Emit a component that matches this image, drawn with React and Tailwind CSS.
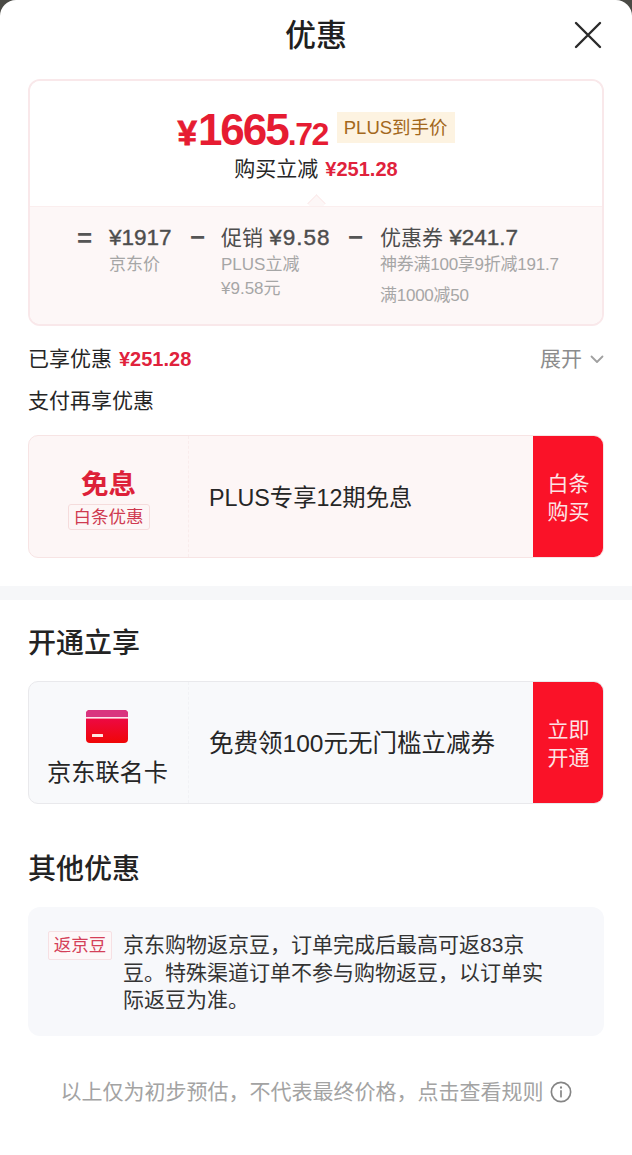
import React from "react";

const FONT = { fontFamily: '"Liberation Sans","Noto Sans CJK SC",sans-serif' };

function Offer({ tone, left, text, textSize, cta }) {
  const pink = tone === "pink";
  return (
    <div className={`mx-7 flex h-[123px] overflow-hidden rounded-[10px] border ${pink ? "border-[#f7e4e4] bg-[#fdf6f6]" : "border-[#e9e9ec] bg-[#f8f9fb]"}`}>
      <div className={`flex w-[160px] shrink-0 flex-col items-center justify-center border-r border-dashed ${pink ? "border-[#f9ecec]" : "border-[#f1f2f5]"}`}>
        {left}
      </div>
      <div className={`flex flex-1 items-center pt-1 pl-5 text-[#262626] ${textSize}`}>{text}</div>
      <div className="flex w-[70px] shrink-0 items-center justify-center bg-[#fa1228] pt-[2px] pl-[1px] text-center text-[21px] leading-[28px] text-[#fde3e5]">
        <span>{cta[0]}<br />{cta[1]}</span>
      </div>
    </div>
  );
}

export default function App() {
  return (
    <div className="min-h-screen bg-[#4a4a45]" style={FONT}>
      <div className="min-h-[1155px] rounded-t-[16px] bg-white">
        <header className="relative flex h-[79px] items-start justify-center pt-[13px]">
          <h1 className="text-[31px] leading-[46px] font-medium text-[#1f1f1f]">优惠</h1>
          <svg className="absolute top-[21px] right-[30px]" width="28" height="28" viewBox="0 0 28 28" fill="none" stroke="#2a2a2a" strokeWidth="2.4" strokeLinecap="round">
            <path d="M2 2 L26 26 M26 2 L2 26" />
          </svg>
        </header>

        <section className="relative mx-7 h-[247px] overflow-hidden rounded-[12px] border-2 border-[#f9e8ea]">
          <div className="flex h-[125px] flex-col items-center bg-white pt-[27px]">
            <div className="flex items-center">
              <span className="flex items-baseline font-bold text-[#e61c32]">
                <span className="text-[35px] leading-[44px] [-webkit-text-stroke:0.8px_#e61c32]">¥</span>
                <span className="ml-[1px] text-[44px] leading-[44px] tracking-[-2px]">1665</span>
                <span className="text-[32px] leading-[44px] tracking-[-1.5px]">.72</span>
              </span>
              <span className="mb-[9px] ml-[9px] flex h-[31px] items-center bg-[#fdf3e1] px-[7px] text-[18.5px] text-[#a3681c]">PLUS到手价</span>
            </div>
            <div className="mt-[-1px] flex items-center text-[21px] leading-[28px] text-[#262626]">
              <span>购买立减</span>
              <span className="ml-[7px] text-[20px] font-bold text-[#e0223c]">¥251.28</span>
            </div>
          </div>
          <div className="absolute top-[116px] left-[280px] h-[13px] w-[13px] rotate-45 border-t border-l border-[#fbeaea] bg-[#fdf7f7]" />
          <div className="relative flex h-[118px] border-t border-[#fbeeee] bg-[#fdf7f7] pt-[17px] pl-[47px]">
            <span className="w-[32px] text-[26px] leading-[28px] font-bold text-[#555]">=</span>
            <div className="w-[81px]">
              <div className="text-[22.5px] leading-[28px] text-[#4d4d4d] [-webkit-text-stroke:0.4px_#4d4d4d]">¥1917</div>
              <div className="mt-[1px] text-[17px] leading-[24px] text-[#a6a6a6]">京东价</div>
            </div>
            <span className="w-[31px] text-[26px] leading-[26px] font-bold text-[#555]">−</span>
            <div className="w-[127px]">
              <div className="text-[22.5px] leading-[28px] text-[#4d4d4d]"><span className="text-[21px]">促销</span> <span className="tracking-[1px] [-webkit-text-stroke:0.4px_#4d4d4d]">¥9.58</span></div>
              <div className="mt-[1px] text-[17px] leading-[24px] text-[#a6a6a6]">PLUS立减</div>
              <div className="text-[17px] leading-[24px] text-[#a6a6a6]">¥9.58元</div>
            </div>
            <span className="w-[32px] text-[26px] leading-[26px] font-bold text-[#555]">−</span>
            <div>
              <div className="text-[22.5px] leading-[28px] text-[#4d4d4d]"><span className="text-[21px]">优惠券</span> <span className="[-webkit-text-stroke:0.4px_#4d4d4d]">¥241.7</span></div>
              <div className="mt-[1px] text-[17px] leading-[24px] tracking-[-0.25px] whitespace-nowrap text-[#a6a6a6]">神券满100享9折减191.7</div>
              <div className="mt-[7px] text-[17px] leading-[24px] tracking-[-0.25px] text-[#a6a6a6]">满1000减50</div>
            </div>
          </div>
        </section>

        <div className="mx-7 mt-[18px] flex h-[30px] items-center justify-between text-[21px] text-[#262626]">
          <div className="flex items-center">
            <span>已享优惠</span>
            <span className="ml-[7px] text-[20px] font-bold text-[#e0223c]">¥251.28</span>
          </div>
          <div className="flex items-center text-[#8c8c8c]">
            <span>展开</span>
            <svg className="ml-2" width="14" height="9" viewBox="0 0 14 9" fill="none" stroke="#a0a0a0" strokeWidth="1.8" strokeLinecap="round" strokeLinejoin="round">
              <path d="M1.5 1.5 L7 7 L12.5 1.5" />
            </svg>
          </div>
        </div>
        <div className="mx-7 mt-[12px] h-[30px] text-[21px] leading-[30px] text-[#262626]">支付再享优惠</div>

        <div className="mt-[19px]">
          <Offer
            tone="pink"
            text="PLUS专享12期免息"
            textSize="text-[23.3px]"
            cta={["白条", "购买"]}
            left={
              <div className="flex flex-col items-center pt-[5px]">
                <span className="text-[27.5px] leading-[34px] font-bold text-[#dd2139]">免息</span>
                <span className="mt-[2px] flex h-[26px] items-center rounded-[3px] border border-[#f5dcdc] px-[5px] text-[17.5px] text-[#cf3a50]">白条优惠</span>
              </div>
            }
          />
        </div>

        <div className="mt-[28px] h-[14px] bg-[#f6f7f9]" />

        <h2 className="mx-7 mt-[24px] h-[40px] text-[28px] leading-[40px] font-medium text-[#232323]">开通立享</h2>

        <div className="mt-[17px]">
          <Offer
            tone="gray"
            text="免费领100元无门槛立减券"
            textSize="text-[24.5px]"
            cta={["立即", "开通"]}
            left={
              <div className="flex flex-col items-center pt-[12px] pr-[2px]">
                <svg width="42" height="33" viewBox="0 0 42 33" className="mb-[15px]">
                  <defs>
                    <linearGradient id="cardBody" x1="0" y1="0" x2="0" y2="1">
                      <stop offset="0" stopColor="#ec0a58" />
                      <stop offset="1" stopColor="#f00606" />
                    </linearGradient>
                  </defs>
                  <rect x="0" y="0" width="42" height="33" rx="4" fill="url(#cardBody)" />
                  <path d="M0 4 a4 4 0 0 1 4-4 h34 a4 4 0 0 1 4 4 v3 H0 z" fill="#d9347f" />
                  <rect x="0" y="7" width="42" height="1.6" fill="#ffe3ec" />
                  <rect x="6" y="24" width="11" height="3" rx="0.5" fill="#ffe5e0" />
                </svg>
                <span className="text-[24.2px] leading-[30px] text-[#262626]">京东联名卡</span>
              </div>
            }
          />
        </div>

        <h2 className="mx-7 mt-[46px] h-[40px] text-[28px] leading-[40px] font-medium text-[#232323]">其他优惠</h2>

        <div className="mx-7 mt-[17px] flex h-[129px] rounded-[12px] bg-[#f7f8fb] pt-[24px] pl-5">
          <span className="flex h-[29px] w-[64px] shrink-0 items-center justify-center rounded-[2px] border border-[#f6e0e3] bg-[#fdf7f8] text-[17.5px] text-[#d43f58]">返京豆</span>
          <p className="ml-[11px] w-[428px] text-[21px] leading-[27.5px] text-[#333]">
            京东购物返京豆，订单完成后最高可返83京豆。特殊渠道订单不参与购物返豆，以订单实际返豆为准。
          </p>
        </div>

        <div className="mt-[41px] flex items-center justify-center text-[21px] leading-[30px] text-[#a3a3a3]">
          <span>以上仅为初步预估，不代表最终价格，点击查看规则</span>
          <svg className="ml-[6px]" width="22" height="22" viewBox="0 0 21 21" fill="none" stroke="#858585" strokeWidth="1.6" strokeLinecap="round">
            <circle cx="10.5" cy="10.5" r="9.2" />
            <path d="M10.5 9.5 V15" />
            <path d="M10.5 6 V6.4" strokeWidth="2" />
          </svg>
        </div>
      </div>
    </div>
  );
}
